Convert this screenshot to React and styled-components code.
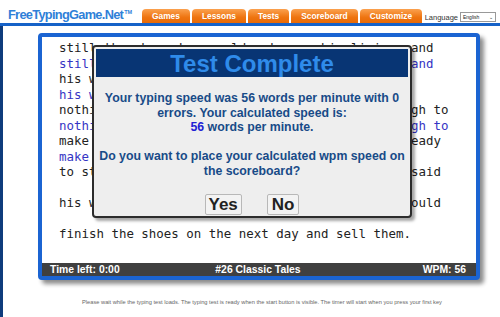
import React from "react";
import styled, { createGlobalStyle } from "styled-components";

const Global = createGlobalStyle`
  html, body { margin: 0; padding: 0; background: #fff; }
  body { font-family: "Liberation Sans", Arial, sans-serif; width: 500px; height: 317px; overflow: hidden; }
`;

const Header = styled.header`
  height: 23px;
  display: flex;
  align-items: flex-end;
  border-bottom: 3px solid #1662c8;
`;

const Logo = styled.div`
  align-self: flex-start;
  margin: 7px 0 0 8px;
  font-weight: bold;
  font-size: 12.8px;
  letter-spacing: -0.7px;
  color: #2f80d8;
  width: 134px;
  sup {
    font-size: 5.5px;
    letter-spacing: 0;
    vertical-align: 5px;
    margin-left: 1px;
  }
`;

const Tabs = styled.nav`
  display: flex;
  gap: 2px;
`;

const Tab = styled.div`
  height: 14px;
  padding: 0 10px;
  border-radius: 4px 4px 0 0;
  background: linear-gradient(#fba14f, #ee7410 60%, #e96a05);
  color: #fff;
  font-weight: bold;
  font-size: 8.4px;
  display: flex;
  align-items: center;
  justify-content: center;
  min-width: ${(p) => p.$w || 0}px;
  box-sizing: border-box;
`;

const Lang = styled.div`
  margin-left: auto;
  margin-right: 4px;
  margin-bottom: 1px;
  display: flex;
  align-items: center;
  gap: 2px;
  font-size: 7.5px;
  color: #333;
`;

const Select = styled.div`
  width: 30px;
  height: 8px;
  border: 1px solid #999;
  font-size: 5px;
  display: flex;
  align-items: center;
  justify-content: space-between;
  padding: 0 2px;
  box-sizing: content-box;
  color: #222;
`;

const Page = styled.main`
  border-left: 3px solid #0f3c7c;
  height: 291px;
  box-sizing: border-box;
  padding: 7px 0 0 35px;
`;

const Board = styled.section`
  width: 442px;
  height: 247px;
  box-sizing: border-box;
  border: 4px solid #1b64d2;
  border-radius: 4px;
  box-shadow: 4px 4px 4px rgba(0, 0, 0, 0.45);
  background: #fff;
  display: flex;
  flex-direction: column;
`;

const TextArea = styled.div`
  flex: 1;
  position: relative;
  padding: 3px 0 0 17px;
  font-family: "DejaVu Sans Mono", monospace;
  font-size: 12.45px;
  line-height: 15.5px;
  overflow: hidden;
`;

const Line = styled.div`
  white-space: pre;
  height: 15.5px;
  color: ${(p) => (p.$typed ? "#3434c4" : "#222")};
`;

const StatusBar = styled.footer`
  height: 13px;
  background: #404040;
  color: #fff;
  font-weight: bold;
  font-size: 10.4px;
  display: grid;
  grid-template-columns: 1fr auto 1fr;
  align-items: center;
  padding: 0 10px 0 8px;
  span:last-child { justify-self: end; }
`;

const Modal = styled.div`
  position: absolute;
  left: 50px;
  top: 8px;
  width: 320px;
  height: 173px;
  box-sizing: border-box;
  border: 2px solid #2c2c2c;
  border-radius: 4px;
  background: #eeeeee;
  box-shadow: 3px 3px 3px rgba(0, 0, 0, 0.35);
  font-family: "Liberation Sans", Arial, sans-serif;
  display: flex;
  flex-direction: column;
  align-items: center;
`;

const Title = styled.h1`
  margin: 2px 2px 0;
  align-self: stretch;
  height: 28px;
  background: #083574;
  color: #2f8bea;
  font-size: 24px;
  font-weight: bold;
  text-align: center;
  line-height: 29px;
`;

const Message = styled.p`
  margin: ${(p) => (p.$first ? "14px" : "14.6px")} 0 0;
  font-size: 12.3px;
  font-weight: bold;
  line-height: 14.6px;
  color: #184b88;
  text-align: center;
  b { color: #2020d4; }
`;

const Buttons = styled.div`
  display: flex;
  gap: 25px;
  margin-top: 15px;
`;

const Button = styled.button`
  height: 21px;
  padding: 0 ${(p) => p.$pad}px;
  border: 1px solid #b8b8b8;
  border-radius: 2px;
  background: #f3f3f3;
  font-family: "Liberation Sans", Arial, sans-serif;
  font-weight: bold;
  font-size: 17px;
  color: #222;
  line-height: 19px;
`;

const Notice = styled.p`
  margin: 19px 0 0;
  text-align: center;
  font-size: 5.7px;
  color: #666;
  padding-right: 14px;
  white-space: nowrap;
`;

const lines = [
  ["still the shoemaker could not earn his living, and"],
  ["still the shoemaker could not earn his living, and", true],
  ["his wife grew very worried, for they had"],
  ["his wife grew very worried, for they had", true],
  ["nothing left but the leather for one pair, enough to"],
  ["nothing left but the leather for one pair, enough to", true],
  ["make a pair of shoes. He cut them out and got ready"],
  ["make a pair of shoes. He cut", true],
  ["to start the work early next morning. His wife said"],
  ["", true],
  ["his wife hoped that with some good fortune he could"],
  ["", true],
  ["finish the shoes on the next day and sell them."],
];

const tabs = [
  ["Games", 46],
  ["Lessons", 52],
  ["Tests", 37],
  ["Scoreboard", 63],
  ["Customize", 60],
];

export default function App() {
  return (
    <>
      <Global />
      <Header>
        <Logo>
          FreeTypingGame.Net<sup>TM</sup>
        </Logo>
        <Tabs>
          {tabs.map(([t, w]) => (
            <Tab key={t} $w={w}>
              {t}
            </Tab>
          ))}
        </Tabs>
        <Lang>
          Language
          <Select>
            <span>English</span>
            <span>⌄</span>
          </Select>
        </Lang>
      </Header>
      <Page>
        <Board>
          <TextArea>
            {lines.map(([t, typed], i) => (
              <Line key={i} $typed={typed}>
                {t}
              </Line>
            ))}
            <Modal>
              <Title>Test Complete</Title>
              <Message $first>
                Your typing speed was 56 words per minute with 0
                <br />
                errors. Your calculated speed is:
                <br />
                <b>56</b> words per minute.
              </Message>
              <Message>
                Do you want to place your calculated wpm speed on
                <br />
                the scoreboard?
              </Message>
              <Buttons>
                <Button $pad={3}>Yes</Button>
                <Button $pad={4}>No</Button>
              </Buttons>
            </Modal>
          </TextArea>
          <StatusBar>
            <span>Time left: 0:00</span>
            <span>#26 Classic Tales</span>
            <span>WPM: 56</span>
          </StatusBar>
        </Board>
        <Notice>
          Please wait while the typing test loads. The typing test is ready when the start button is visible. The timer will start when you press your first key
        </Notice>
      </Page>
    </>
  );
}
